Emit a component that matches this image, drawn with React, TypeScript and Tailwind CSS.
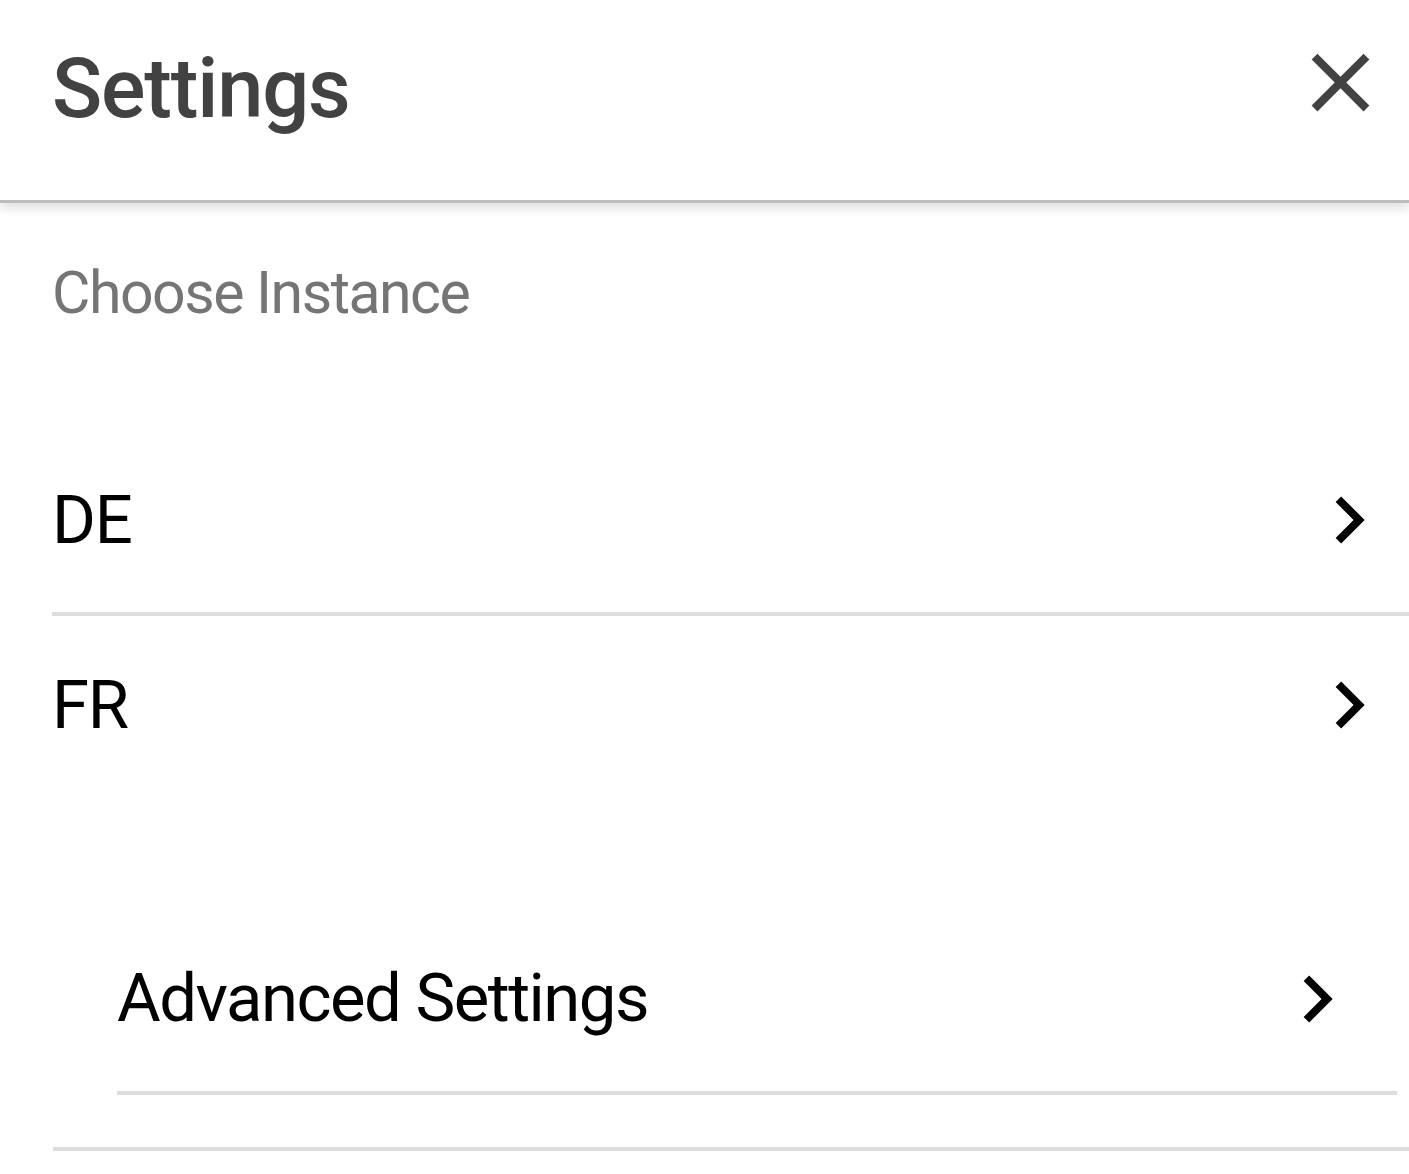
import React from "react";

function ChevronRight({ className = "" }: { className?: string }) {
  return (
    <svg viewBox="0 0 24 24" className={className} fill="currentColor">
      <path d="M10 6L8.59 7.41 13.17 12l-4.58 4.59L10 18l6-6z" />
    </svg>
  );
}

function CloseIcon({ className = "" }: { className?: string }) {
  return (
    <svg viewBox="0 0 24 24" className={className} fill="currentColor">
      <path d="M19 6.41L17.59 5 12 10.59 6.41 5 5 6.41 10.59 12 5 17.59 6.41 19 12 13.41 17.59 19 19 17.59 13.41 12z" />
    </svg>
  );
}

const instances = [
  { code: "DE", height: "h-[184px]", divider: true },
  { code: "FR", height: "h-[178px]", divider: false },
];

export default function App() {
  return (
    <div className="w-[1409px] h-[1174px] bg-white overflow-hidden font-['Roboto',sans-serif]">
      {/* Header */}
      <div className="relative z-10 h-[203px] flex items-start justify-between pl-[52px] pr-[19px] pt-[33px] border-b-[3px] border-[#bdbdbd] bg-white shadow-[0_5px_10px_rgba(0,0,0,0.13)]">
        <h1 className="mt-[14px] text-[83px] leading-none font-medium tracking-[-1.2px] text-[#424242]">Settings</h1>
        <CloseIcon className="w-[99px] h-[99px] text-[#424242]" />
      </div>

      {/* Instances */}
      <div className="pl-[52px]">
        <div className="pt-[60px] text-[59px] leading-none tracking-[-1.5px] text-[#757575]">Choose Instance</div>

        <div className="mt-[106px]">
          {instances.map((item) => (
            <div key={item.code}>
              <div className={`${item.height} flex items-center justify-between pr-[13px]`}>
                <span className="text-[67px] leading-none tracking-[-1.2px] text-black">{item.code}</span>
                <ChevronRight className="w-[94px] h-[94px] text-black" />
              </div>
              {item.divider && <div className="h-[4px] bg-[#dddddd]" />}
            </div>
          ))}
        </div>
      </div>

      {/* Advanced */}
      <div className="pl-[117px] pr-[12px] mt-[112px]">
        <div className="h-[185px] flex items-center justify-between pr-[33px]">
          <span className="text-[67px] leading-none tracking-[-1.5px] text-black">Advanced Settings</span>
          <ChevronRight className="w-[94px] h-[94px] text-black" />
        </div>
        <div className="h-[4px] bg-[#dddddd]" />
      </div>
      <div className="pl-[53px] mt-[52px]">
        <div className="h-[4px] bg-[#dddddd]" />
      </div>
    </div>
  );
}
